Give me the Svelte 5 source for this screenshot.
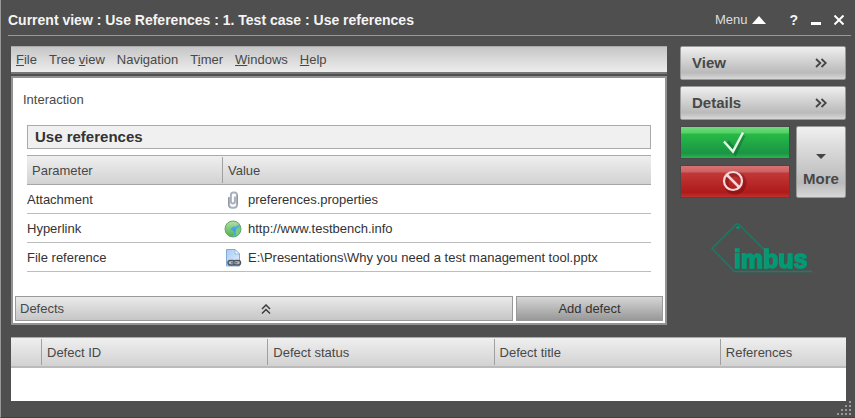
<script>
  const menus = [
    ['', 'F', 'ile'],
    ['Tree ', 'v', 'iew'],
    ['Navi', 'g', 'ation'],
    ['T', 'i', 'mer'],
    ['', 'W', 'indows'],
    ['', 'H', 'elp']
  ];
  const references = [
    { name: 'Attachment', kind: 'clip', value: 'preferences.properties' },
    { name: 'Hyperlink', kind: 'globe', value: 'http://www.testbench.info' },
    { name: 'File reference', kind: 'file', value: 'E:\\Presentations\\Why you need a test management tool.pptx' }
  ];
  const sections = ['View', 'Details'];
</script>

<div class="window">
  <header>
    <h1>Current view : Use References : 1. Test case : Use references</h1>
    <div class="controls">
      <button class="menu">Menu
        <svg width="14" height="8" viewBox="0 0 14 8"><path d="M7 0 14 8H0z" fill="#fff" /></svg>
      </button>
      <button class="help" aria-label="Help">?</button>
      <button aria-label="Minimize">
        <svg width="10" height="12" viewBox="0 0 10 12"><path d="M0 8h10v3H0z" fill="#fff" /></svg>
      </button>
      <button aria-label="Close">
        <svg width="10" height="10" viewBox="0 0 10 10"><path d="M.500 .500l9 9M9.500 .500l-9 9" stroke="#fff" stroke-width="2" /></svg>
      </button>
    </div>
  </header>

  <div class="body">
    <main>
      <nav>
        {#each menus as [before, key, after]}
          <button>{before}<u>{key}</u>{after}</button>
        {/each}
      </nav>

      <section class="panel">
        <div class="content">
          <p>Interaction</p>
          <h2>Use references</h2>
          <table class="refs">
            <colgroup><col class="name" /><col /></colgroup>
            <thead><tr><th><span>Parameter</span></th><th><span>Value</span></th></tr></thead>
            <tbody>
              {#each references as ref}
                <tr>
                  <td>{ref.name}</td>
                  <td>
                    <div class="value">
                      {#if ref.kind === 'clip'}
                        <svg width="18" height="18" viewBox="0 0 18 18" fill="none">
                          <path d="M5 6v7.500q0 3.200 3.200 3.200h1.600q3.200 0 3.200-3.200V4.300Q13 1.500 10.400 1.500H9.300Q6.900 1.500 6.900 4v6.600q0 2 2 2t2-2V5.600" stroke="#a9b2bc" stroke-width="2" />
                          <path d="M4.500 7v6.500q0 2.500 1.500 3M13.500 4v9.500" stroke="#7f8994" stroke-width=".6" />
                        </svg>
                      {:else if ref.kind === 'globe'}
                        <svg width="18" height="18" viewBox="0 0 18 18">
                          <defs>
                            <radialGradient id="sea" cx=".6" cy=".6" r=".6"><stop offset="0" stop-color="#3c9be8" /><stop offset="1" stop-color="#6fc0d8" /></radialGradient>
                            <linearGradient id="land" x1="0" y1="0" x2="0" y2="1"><stop offset="0" stop-color="#b4e0a0" /><stop offset="1" stop-color="#4cb04c" /></linearGradient>
                          </defs>
                          <circle cx="9" cy="9" r="8" fill="url(#sea)" />
                          <path d="M1 9Q1 2 8 1.200Q13 1 15.500 4.500L13 5l-1 2-2-1-2 1.500L6 9l2 1.500 2 1v2L8 17Q1 15.500 1 9z" fill="url(#land)" />
                          <path d="M12 9l3-1.500 1.800 1q0 4.500-4.300 7.200L11.500 13z" fill="#7dcc79" />
                          <circle cx="9" cy="9" r="8" fill="none" stroke="#68a86c" />
                        </svg>
                      {:else}
                        <svg width="18" height="18" viewBox="0 0 18 18">
                          <defs><linearGradient id="sheet" x1="0" y1="0" x2="1" y2="1"><stop offset="0" stop-color="#a9cbf3" /><stop offset="1" stop-color="#e3effc" /></linearGradient></defs>
                          <path d="M2.500.500h8.500l4.500 4.500v12h-13z" fill="url(#sheet)" stroke="#83a9da" />
                          <path d="M11 .500v4.500h4.500z" fill="#f3f8ff" stroke="#83a9da" stroke-width=".7" />
                          <rect x="4" y="11.500" width="7" height="4.500" rx="2.200" fill="#b8bec5" stroke="#50575f" stroke-width="1.500" />
                          <rect x="9.500" y="11.500" width="7" height="4.500" rx="2.200" fill="#b8bec5" stroke="#50575f" stroke-width="1.500" />
                          <path d="M7 13.800h6.500" stroke="#71777e" stroke-width="1.500" />
                        </svg>
                      {/if}
                      <span>{ref.value}</span>
                    </div>
                  </td>
                </tr>
              {/each}
            </tbody>
          </table>
        </div>
        <div class="actions">
          <button class="defects">Defects
            <svg width="10" height="10" viewBox="0 0 10 10" fill="none" stroke="#3c3c3c" stroke-width="1.500"><path d="M1 5l4-4 4 4M1 9.500l4-4 4 4" /></svg>
          </button>
          <button class="add">Add defect</button>
        </div>
      </section>
    </main>

    <aside>
      {#each sections as label}
        <button class="section">{label}
          <svg width="12" height="10" viewBox="0 0 12 10" fill="none" stroke="#444" stroke-width="1.800"><path d="M1 1l4.300 4L1 9M6.500 1l4.300 4-4.300 4" /></svg>
        </button>
      {/each}
      <div class="verdict">
        <div class="results">
          <button class="pass" aria-label="Pass">
            <svg width="32" height="28" viewBox="0 0 32 28" fill="none">
              <path d="M8 13l8 10 8-17" stroke="#0a4a20" stroke-opacity=".35" stroke-width="5" />
              <path d="M5 12.500l9 10L24 3.500" stroke="#e4f7e6" stroke-width="2.500" />
            </svg>
          </button>
          <button class="fail" aria-label="Fail">
            <svg width="32" height="28" viewBox="0 0 32 28" fill="none">
              <circle cx="16" cy="15" r="9" stroke="#500" stroke-opacity=".3" stroke-width="5" />
              <circle cx="14" cy="13" r="9" stroke="#f6dada" stroke-width="2.200" />
              <path d="M7.500 6.500l13 13" stroke="#f6dada" stroke-width="2.500" />
            </svg>
          </button>
        </div>
        <button class="more">
          <svg width="10" height="5" viewBox="0 0 10 5"><path d="M0 0h10L5 5z" fill="#444" /></svg>
          More
        </button>
      </div>
      <svg class="logo" width="104" height="52" viewBox="0 0 104 52">
        <path d="M54 27.500 29 2.500Q27.500 1 26 2.500L2 26.500 24.500 49.500H102" fill="none" stroke="#138067" stroke-width="1.300" />
        <circle cx="28" cy="5.500" r="1.600" fill="#009a75" />
        <text x="24" y="46" fill="#009a75" stroke="#009a75">imbus</text>
      </svg>
    </aside>
  </div>

  <table class="list">
    <colgroup><col class="mark" /><col class="wide" /><col class="wide" /><col class="wide" /><col /></colgroup>
    <thead>
      <tr><th></th><th><span>Defect ID</span></th><th><span>Defect status</span></th><th><span>Defect title</span></th><th><span>References</span></th></tr>
    </thead>
    <tbody><tr><td colspan="5"></td></tr></tbody>
  </table>

  <footer>
    <svg width="14" height="14" viewBox="0 0 14 14" fill="#999">
      <path d="M12 0h2v2h-2zM12 4h2v2h-2zM8 4h2v2H8zM12 8h2v2h-2zM8 8h2v2H8zM4 8h2v2H4zM12 12h2v2h-2zM8 12h2v2H8zM4 12h2v2H4zM0 12h2v2H0z" />
    </svg>
  </footer>
</div>

<style>
  :global(body) { background: #4f4f4f; }
  .window {
    box-sizing: border-box;
    min-height: 100vh;
    padding: 0 9px 0 7px;
    border-left: 1px solid #999;
    border-bottom: 1px solid #414141;
    background: #4f4f4f;
    font: 13px/16px "Liberation Sans", Arial, sans-serif;
    color: #484848;
  }
  button {
    margin: 0;
    padding: 0;
    border: 0;
    background: none;
    font: inherit;
    color: inherit;
  }
  svg { display: block; }
  header {
    display: flex;
    align-items: center;
    justify-content: space-between;
    height: 36px;
    padding: 5px 7px 0 0;
    box-sizing: border-box;
    border-bottom: 1px solid #999;
    margin-right: -5px;
    color: #f4f4f4;
  }
  h1 { margin: 0; font-size: 14px; }
  .controls { display: flex; align-items: center; gap: 13px; }
  .menu { display: flex; align-items: center; gap: 5px; margin-right: 10px; color: #ddd; }
  .help { font-size: 14px; font-weight: bold; }

  .body { display: flex; gap: 13px; margin: 10px 0 12px 3px; }
  main { flex: 1; min-width: 0; display: flex; flex-direction: column; }
  nav {
    display: flex;
    gap: 12px;
    height: 25px;
    padding-left: 5px;
    border-top: 1px solid #aaa;
    border-bottom: 2px solid #777;
    margin-bottom: 2px;
    background: linear-gradient(#c6c6c6, #ededed);
  }
  .panel {
    flex: 1;
    display: flex;
    flex-direction: column;
    justify-content: space-between;
    padding: 2px;
    border: 2px solid #929292;
    background: #fff;
  }
  .content { padding: 12px 12px 24px; }
  p { margin: 0 0 17px -4px; }
  h2 {
    margin: 0 0 6px;
    padding: 3px 7px;
    border: 1px solid #aaa;
    background: #f0f0f0;
    font-size: 15px;
    line-height: 16px;
    color: #333;
  }
  table { width: 100%; border-collapse: separate; border-spacing: 0; table-layout: fixed; }
  th {
    height: 28px;
    padding: 0;
    border-top: 1px solid #aaa;
    border-bottom: 1px solid #a6a6a6;
    background: linear-gradient(#efefef, #d2d2d2);
    text-align: left;
    font-weight: normal;
  }
  th span { display: block; padding: 6px 5px 4px; line-height: 16px; }
  th + th span { border-left: 1px solid #a0a0a0; }
  .name { width: 195px; }
  td { height: 26px; padding: 2px 0 0; border-bottom: 1px solid #bdbdbd; color: #333; }
  .value { display: flex; align-items: center; gap: 6px; padding-left: 2px; }
  .actions { display: flex; gap: 3px; }
  .actions button { height: 25px; border: 1px solid #999; box-sizing: border-box; }
  .defects {
    flex: 1;
    display: grid;
    grid-template-columns: 1fr 10px 1fr;
    align-items: center;
    text-align: left;
    background: linear-gradient(#eaeaea, #c6c6c6);
  }
  .actions .defects { padding-left: 4px; }
  .add { width: 147px; background: linear-gradient(#d6d6d6, #989898); color: #333; }

  aside { width: 166px; display: flex; flex-direction: column; gap: 6px; }
  .section, .more {
    border: 1px solid #999;
    border-radius: 2px;
    background: linear-gradient(#f0f0f0, #dedede 25%, #bababa 80%, #d8d8d8);
    font-size: 15px;
    font-weight: bold;
  }
  .section { display: flex; align-items: center; justify-content: space-between; height: 34px; padding: 0 18px 0 11px; }
  .verdict { display: flex; gap: 6px; }
  .results { flex: 1; display: flex; flex-direction: column; gap: 6px; }
  .results button { display: flex; align-items: center; justify-content: center; height: 33px; border: 1px solid; }
  .pass { border-color: #3c9350; background: linear-gradient(#6fdc7b, #55cf66 20%, #26bb45 22%, #1b9446 85%, #29b64b); }
  .fail { border-color: #9c4040; background: linear-gradient(#d77373, #cd6060 20%, #c23838 22%, #ae1b1b 85%, #c03030); }
  .more {
    width: 50px;
    display: flex;
    flex-direction: column;
    align-items: center;
    justify-content: flex-end;
    gap: 12px;
    padding-bottom: 10px;
  }
  .logo { margin: 18px 0 0 30px; }
  .logo text { font: bold 25px "Liberation Sans", Arial, sans-serif; stroke-width: 1.400; }

  .list { width: auto; min-width: calc(100% - 3px); margin-left: 3px; background: #fff; }
  .list th { border-bottom: 2px solid #bbb; }
  .list .mark { width: 30px; }
  .list .wide { width: 27.100%; }
  .list td { height: 31px; border: 0; }
  footer { display: flex; justify-content: flex-end; margin-right: -5px; }
</style>
